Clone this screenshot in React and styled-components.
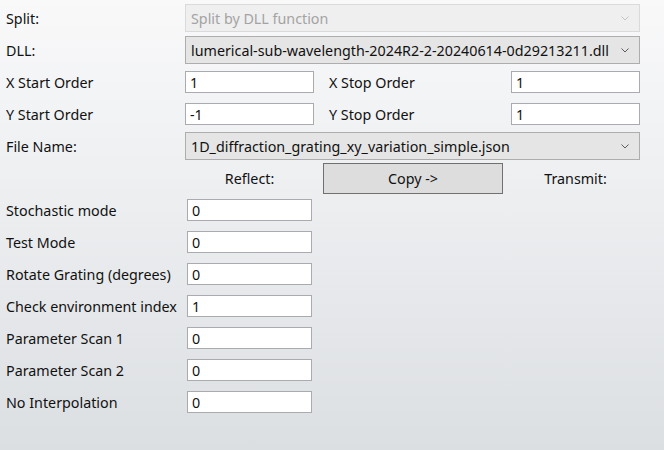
import React from 'react';
import styled, { createGlobalStyle } from 'styled-components';

const Global = createGlobalStyle`
  html, body {
    margin: 0;
    height: 100%;
  }
  body {
    font-family: "Noto Sans", "Open Sans", sans-serif;
    font-size: 14.3px;
    color: #111;
    background: linear-gradient(#f9f9fa 0%, #eceef0 45%, #dcdfe2 100%);
  }
  #root {
    height: 100%;
  }
`

const Page = styled.div`
  height: 450px;
  padding-top: 2px;
  box-sizing: border-box;
`

const TopGrid = styled.div`
  display: grid;
  grid-template-columns: 185px 129px 197px 129px;
  grid-auto-rows: 32px;
  align-items: center;
`

const BottomGrid = styled.div`
  display: grid;
  grid-template-columns: 187px 125px;
  grid-auto-rows: 32px;
  align-items: center;
`

const Label = styled.div`
  padding-left: ${p => p.indent || 6}px;
  white-space: nowrap;
`

const CenterLabel = styled.div`
  text-align: center;
`

const Combo = styled.div`
  grid-column: 2 / 5;
  height: 28px;
  box-sizing: border-box;
  display: flex;
  align-items: center;
  padding: 0 10px 0 5px;
  border: 1px solid ${p => p.disabled ? '#dadada' : '#adadad'};
  background: ${p => p.disabled ? '#efefef' : '#e5e5e5'};
  color: ${p => p.disabled ? '#a3a3a3' : '#111'};
`

const ComboText = styled.span`
  flex: 1;
  white-space: nowrap;
  overflow: hidden;
`

const TextBox = styled.div`
  height: 22px;
  box-sizing: border-box;
  border: 1px solid #a9abb0;
  background: #fff;
  padding-left: 4px;
  display: flex;
  align-items: center;
`

const CopyButton = styled.button`
  margin-left: 9px;
  width: 180px;
  height: 31px;
  border: 1px solid #707070;
  background: #dddddd;
  font: inherit;
  color: #111;
  padding: 0;
`

const Chevron = ({ disabled }) => (
  <svg width="8" height="5" viewBox="0 0 8 5">
    <path d="M0.5 0.5 L4 4 L7.5 0.5" fill="none"
      stroke={disabled ? '#c4c4c4' : '#5a5a5a'} strokeWidth="1" />
  </svg>
);

const lower = [
  ['Stochastic mode', '0'],
  ['Test Mode', '0'],
  ['Rotate Grating (degrees)', '0'],
  ['Check environment index', '1'],
  ['Parameter Scan 1', '0'],
  ['Parameter Scan 2', '0'],
  ['No Interpolation', '0'],
];

export default function App() {
  return (
    <Page>
      <Global />
      <TopGrid>
        <Label>Split:</Label>
        <Combo disabled>
          <ComboText>Split by DLL function</ComboText>
          <Chevron disabled />
        </Combo>

        <Label>DLL:</Label>
        <Combo>
          <ComboText>lumerical-sub-wavelength-2024R2-2-20240614-0d29213211.dll</ComboText>
          <Chevron />
        </Combo>

        <Label>X Start Order</Label>
        <TextBox>1</TextBox>
        <Label indent={15}>X Stop Order</Label>
        <TextBox>1</TextBox>

        <Label>Y Start Order</Label>
        <TextBox>-1</TextBox>
        <Label indent={15}>Y Stop Order</Label>
        <TextBox>1</TextBox>

        <Label>File Name:</Label>
        <Combo>
          <ComboText>1D_diffraction_grating_xy_variation_simple.json</ComboText>
          <Chevron />
        </Combo>

        <div />
        <CenterLabel>Reflect:</CenterLabel>
        <CopyButton>Copy -&gt;</CopyButton>
        <CenterLabel>Transmit:</CenterLabel>
      </TopGrid>
      <BottomGrid>
        {lower.map(([name, value]) => (
          <React.Fragment key={name}>
            <Label>{name}</Label>
            <TextBox>{value}</TextBox>
          </React.Fragment>
        ))}
      </BottomGrid>
    </Page>
  );
}
